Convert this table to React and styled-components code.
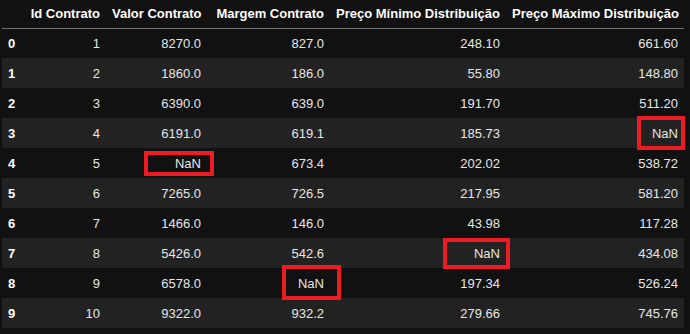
import React from "react";
import styled, { createGlobalStyle } from "styled-components";

const GlobalStyle = createGlobalStyle`
    html, body {
        margin: 0;
        padding: 0;
        background: #111111;
    }
    body {
        font-family: "Liberation Sans", Arial, sans-serif;
        font-size: 13px;
        color: #e6e6e6;
    }
`;

const columns = [
    { title: "", width: 22 },
    { title: "Id Contrato", width: 82 },
    { title: "Valor Contrato", width: 101 },
    { title: "Margem Contrato", width: 123 },
    { title: "Preço Mínimo Distribuição", width: 176 },
    { title: "Preço Máximo Distribuição", width: 178 },
];

const rows = [
    [1, "8270.0", "827.0", "248.10", "661.60"],
    [2, "1860.0", "186.0", "55.80", "148.80"],
    [3, "6390.0", "639.0", "191.70", "511.20"],
    [4, "6191.0", "619.1", "185.73", "NaN"],
    [5, "NaN", "673.4", "202.02", "538.72"],
    [6, "7265.0", "726.5", "217.95", "581.20"],
    [7, "1466.0", "146.0", "43.98", "117.28"],
    [8, "5426.0", "542.6", "NaN", "434.08"],
    [9, "6578.0", "NaN", "197.34", "526.24"],
    [10, "9322.0", "932.2", "279.66", "745.76"],
];

// red annotation boxes drawn over the output
const marks = [
    { left: 142, top: 151, width: 70, height: 25 },
    { left: 635, top: 116, width: 48, height: 34 },
    { left: 441, top: 238, width: 67, height: 31 },
    { left: 280, top: 265, width: 59, height: 35 },
];

const App = () => {
    return (
        <Page>
            <GlobalStyle />
            <Frame>
                <Table>
                    <colgroup>
                        {columns.map((c, i) => (
                            <col key={i} style={{ width: c.width }} />
                        ))}
                    </colgroup>
                    <thead>
                        <tr>
                            {columns.map((c, i) => (
                                <Th key={i}>{c.title}</Th>
                            ))}
                        </tr>
                    </thead>
                    <tbody>
                        {rows.map((r, index) => (
                            <Row key={index} $striped={index % 2 === 1}>
                                <IndexCell>{index}</IndexCell>
                                {r.map((v, j) => (
                                    <Td key={j}>{v}</Td>
                                ))}
                            </Row>
                        ))}
                    </tbody>
                </Table>
                {marks.map((m, i) => (
                    <Mark key={i} style={{ left: m.left, top: m.top, width: m.width, height: m.height }} />
                ))}
            </Frame>
        </Page>
    );
};

const Page = styled.div`
    width: 690px;
    height: 334px;
    background: #111111;
    padding: 0 0 0 2px;
    box-sizing: border-box;
`;

const Frame = styled.div`
    position: relative;
    width: 682px;
`;

const Table = styled.table`
    border-collapse: collapse;
    table-layout: fixed;
    width: 682px;
`;

const Th = styled.th`
    height: 28px;
    padding: 0 6px;
    box-sizing: border-box;
    text-align: right;
    font-weight: bold;
    color: #ffffff;
    white-space: nowrap;
    border-bottom: 1px solid #6e6e6e;
    vertical-align: middle;
`;

const Row = styled.tr`
    height: 30px;
    background: ${(props) => (props.$striped ? "#222222" : "#111111")};
`;

const Td = styled.td`
    padding: 0 6px;
    text-align: right;
    white-space: nowrap;
    vertical-align: middle;
    color: #e6e6e6;
`;

const IndexCell = styled(Td)`
    text-align: left;
    font-weight: bold;
    color: #ffffff;
`;

const Mark = styled.div`
    position: absolute;
    box-sizing: border-box;
    border: 4px solid #ed1c24;
`;

export default App;
